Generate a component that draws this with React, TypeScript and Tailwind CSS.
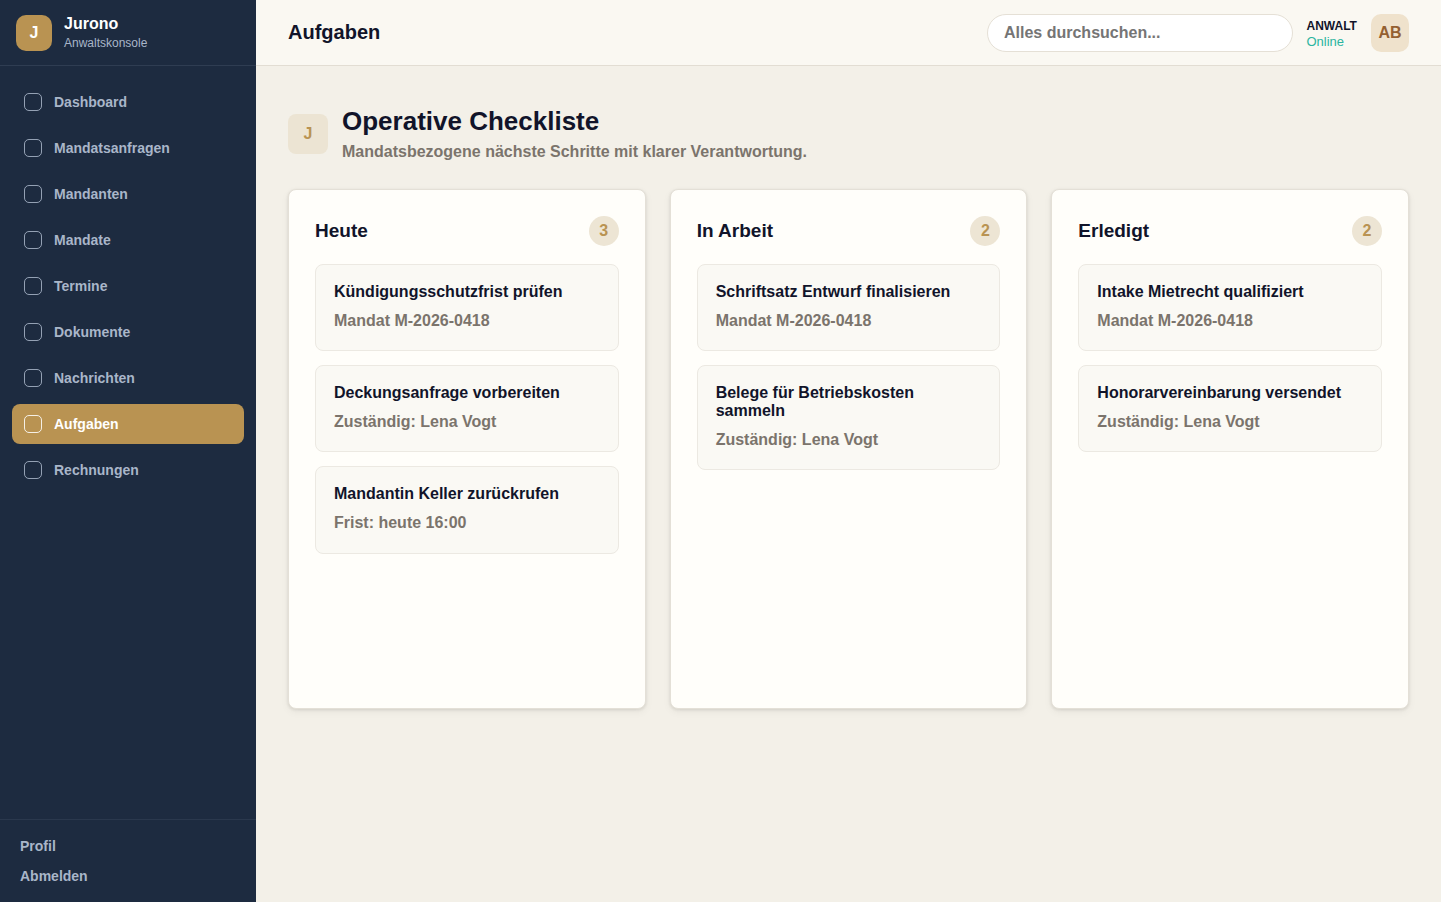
interface Task {
  title: string;
  meta: string;
}

interface Column {
  name: string;
  tasks: Task[];
}

const navItems = [
  'Dashboard',
  'Mandatsanfragen',
  'Mandanten',
  'Mandate',
  'Termine',
  'Dokumente',
  'Nachrichten',
  'Aufgaben',
  'Rechnungen',
];

const columns: Column[] = [
  {
    name: 'Heute',
    tasks: [
      { title: 'Kündigungsschutzfrist prüfen', meta: 'Mandat M-2026-0418' },
      { title: 'Deckungsanfrage vorbereiten', meta: 'Zuständig: Lena Vogt' },
      { title: 'Mandantin Keller zurückrufen', meta: 'Frist: heute 16:00' },
    ],
  },
  {
    name: 'In Arbeit',
    tasks: [
      { title: 'Schriftsatz Entwurf finalisieren', meta: 'Mandat M-2026-0418' },
      { title: 'Belege für Betriebskosten sammeln', meta: 'Zuständig: Lena Vogt' },
    ],
  },
  {
    name: 'Erledigt',
    tasks: [
      { title: 'Intake Mietrecht qualifiziert', meta: 'Mandat M-2026-0418' },
      { title: 'Honorarvereinbarung versendet', meta: 'Zuständig: Lena Vogt' },
    ],
  },
];

function Sidebar({ active }: { active: string }) {
  return (
    <aside className="flex w-64 shrink-0 flex-col bg-[#1d2b40] text-[#a9b6c9]">
      <div className="flex h-[66px] items-center gap-3 border-b border-[#2f3d52] px-4">
        <div className="flex size-9 items-center justify-center rounded-[10px] bg-[#b99352] font-bold text-white">J</div>
        <div>
          <div className="text-base leading-[20px] font-bold text-white">Jurono</div>
          <div className="text-xs leading-[18px]">Anwaltskonsole</div>
        </div>
      </div>

      <nav className="flex flex-1 flex-col gap-1.5 px-3 pt-4">
        {navItems.map((item) => (
          <a
            key={item}
            href="#"
            className={`flex h-10 items-center gap-3 rounded-lg px-3 text-sm font-bold ${
              item === active ? 'bg-[#b99352] text-white' : ''
            }`}
          >
            <span className="size-[18px] rounded-[5px] border border-current opacity-85" />
            {item}
          </a>
        ))}
      </nav>

      <div className="flex h-[83px] flex-col gap-2.5 border-t border-[#2a384d] px-5 pt-4 text-sm font-bold">
        <a href="#">Profil</a>
        <a href="#">Abmelden</a>
      </div>
    </aside>
  );
}

function Topbar() {
  return (
    <header className="flex h-[66px] items-center border-b border-[#e2ddd3] bg-[#faf8f2] px-8">
      <h2 className="mb-0.5 flex-1 text-xl font-bold">Aufgaben</h2>
      <input
        type="search"
        placeholder="Alles durchsuchen..."
        className="h-[38px] w-[306px] rounded-full border border-[#e5e0d6] bg-white px-4 font-bold placeholder:text-[#757575]"
      />
      <div className="ml-[13.5px] w-[50.5px] pt-[3px]">
        <div className="text-xs leading-[15px] font-bold">ANWALT</div>
        <div className="text-[13px] leading-4 text-[#2bb5a0]">Online</div>
      </div>
      <div className="ml-3.5 flex size-[38px] items-center justify-center rounded-[10px] bg-[#efe2cc] font-bold text-[#946031]">AB</div>
    </header>
  );
}

function TaskColumn({ column }: { column: Column }) {
  return (
    <section className="h-[520px] rounded-lg border border-[#e4e0d7] bg-[#fffefa] p-[26px] shadow-[0_1px_3px_rgba(40,38,30,0.12),0_3px_8px_rgba(40,38,30,0.05)]">
      <div className="mb-[18px] flex h-[30px] items-center justify-between">
        <h3 className="text-[19px] font-bold">{column.name}</h3>
        <span className="flex size-[30px] items-center justify-center rounded-full bg-[#ede5d4] font-bold text-[#b99352]">
          {column.tasks.length}
        </span>
      </div>
      <div className="flex flex-col gap-3.5">
        {column.tasks.map((task) => (
          <article key={task.title} className="rounded-lg border border-[#ece9e2] bg-[#faf9f4] p-[18px]">
            <h4 className="leading-[18px] font-bold">{task.title}</h4>
            <p className="mt-2 leading-[1.45] font-bold text-[#7b746c]">{task.meta}</p>
          </article>
        ))}
      </div>
    </section>
  );
}

export default function App() {
  return (
    <div className="flex h-screen bg-[#f3f0e8] font-['Liberation_Sans',Arial,sans-serif] text-[#11142a]">
      <Sidebar active="Aufgaben" />
      <div className="flex min-w-0 flex-1 flex-col">
        <Topbar />
        <main className="flex-1 px-8 pt-[39px]">
          <div className="flex h-[60px] items-center gap-3.5">
            <div className="mt-[-2px] flex size-10 items-center justify-center rounded-lg bg-[#ece4d3] font-bold text-[#b99352]">J</div>
            <div>
              <h1 className="text-[26px] leading-8 font-bold">Operative Checkliste</h1>
              <p className="pt-0.5 leading-[26px] font-bold text-[#7b746c]">Mandatsbezogene nächste Schritte mit klarer Verantwortung.</p>
            </div>
          </div>
          <div className="mt-6 grid grid-cols-3 gap-6">
            {columns.map((column) => (
              <TaskColumn key={column.name} column={column} />
            ))}
          </div>
        </main>
      </div>
    </div>
  );
}
